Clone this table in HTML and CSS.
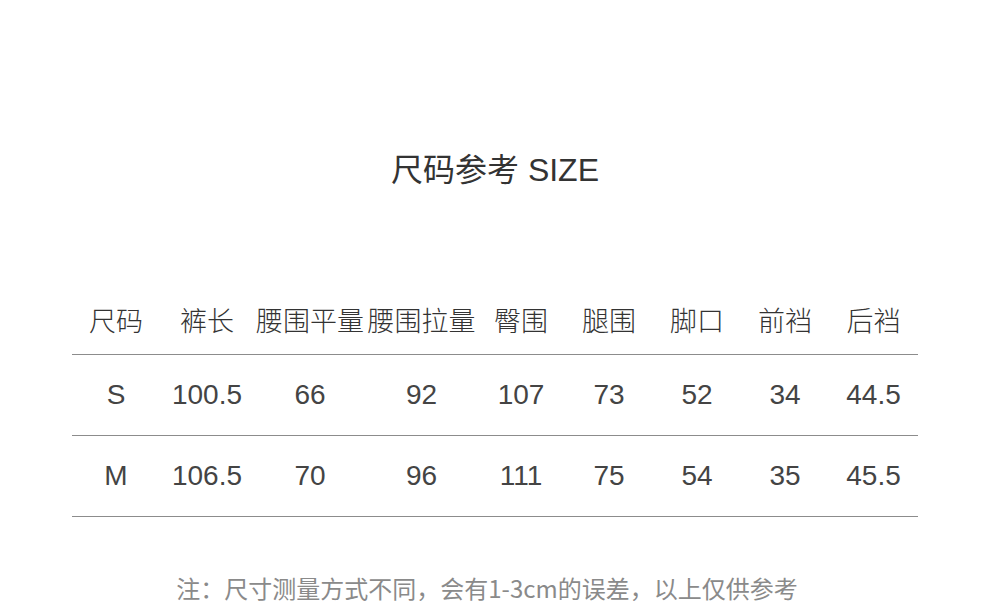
FILE: index.html
```html
<!DOCTYPE html>
<html lang="zh-CN">
<head>
<meta charset="utf-8">
<link rel="stylesheet" href="styles.css">
</head>
<body>
<main class="page">
  <h1 class="title">尺码参考 SIZE</h1>
  <div class="table">
    <div class="row head">
      <span>尺码</span><span>裤长</span><span>腰围平量</span><span>腰围拉量</span><span>臀围</span><span>腿围</span><span>脚口</span><span>前裆</span><span>后裆</span>
    </div>
    <div class="row data">
      <span>S</span><span>100.5</span><span>66</span><span>92</span><span>107</span><span>73</span><span>52</span><span>34</span><span>44.5</span>
    </div>
    <div class="row data">
      <span>M</span><span>106.5</span><span>70</span><span>96</span><span>111</span><span>75</span><span>54</span><span>35</span><span>45.5</span>
    </div>
  </div>
  <p class="note">注：尺寸测量方式不同，会有1-3cm的误差，以上仅供参考</p>
</main>
</body>
</html>
```

FILE: styles.css
```css
html, body {
  margin: 0;
  padding: 0;
  background: #ffffff;
}

.page {
  width: 990px;
  height: 601px;
  overflow: hidden;
  display: flex;
  flex-direction: column;
  align-items: center;
}

.title {
  margin: 150px 0 0;
  height: 40px;
  line-height: 40px;
  font-family: "Liberation Sans", "Noto Sans CJK SC", sans-serif;
  font-weight: 400;
  font-size: 32px;
  color: #333333;
  letter-spacing: 0;
}

.table {
  margin-top: 94px;
  width: 846px;
}

.row {
  display: grid;
  grid-template-columns: 88px 94px 112px 111px 88px 88px 88px 88px 89px;
  align-items: center;
  border-bottom: 1px solid #8c8c8c;
}

.row span {
  text-align: center;
  white-space: nowrap;
}

.head {
  height: 70px;
  font-family: "Noto Sans CJK SC", sans-serif;
  font-weight: 300;
  font-size: 27px;
  color: #333333;
}

.data {
  height: 80px;
  font-family: "Liberation Sans", sans-serif;
  font-size: 28px;
  color: #444444;
}

.note {
  margin: 55px 0 0;
  padding-right: 16px;
  line-height: 32px;
  font-family: "Noto Sans CJK SC", sans-serif;
  font-size: 24px;
  color: #8a8a8a;
}
```
